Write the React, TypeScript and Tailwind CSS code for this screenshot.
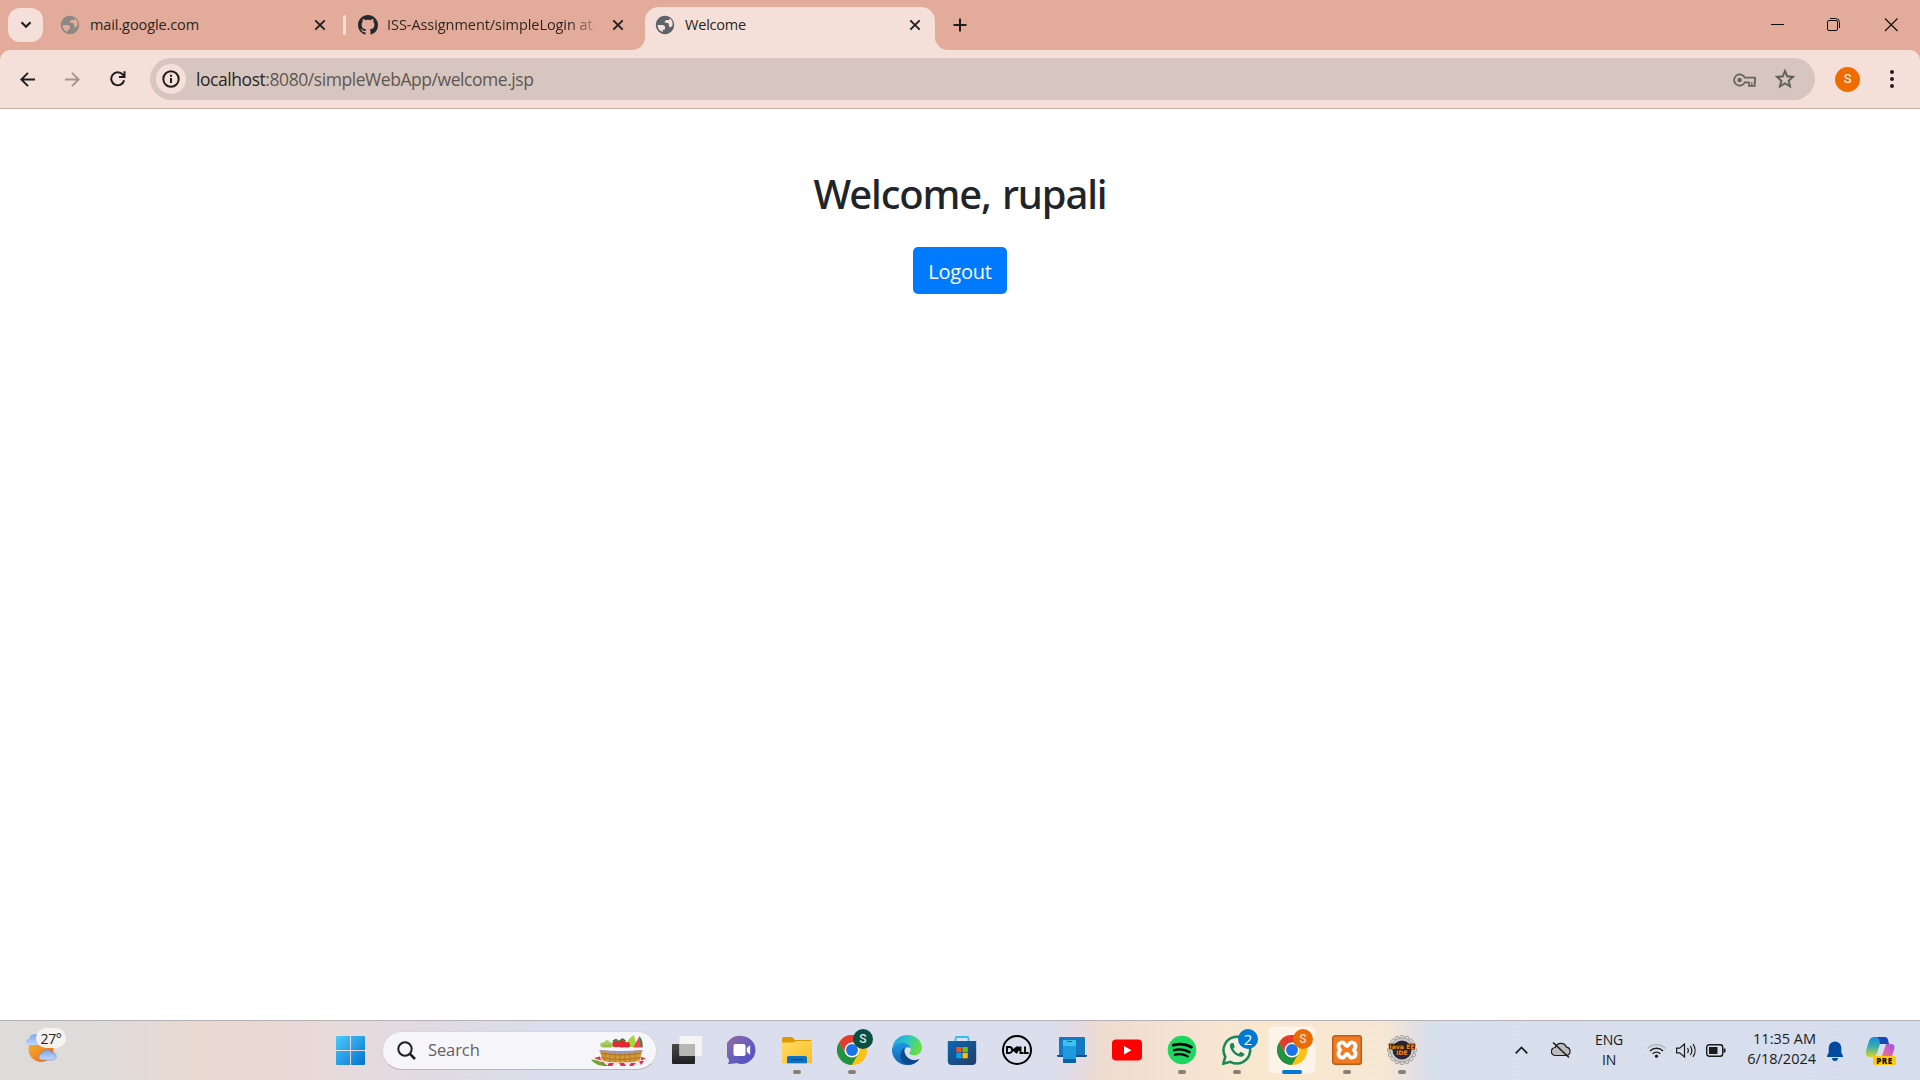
import React from "react";

const ui = "font-['Open_Sans','Noto_Sans',sans-serif]";

function Globe({ color }: { color: string }) {
  return (
    <svg className="size-[22px] shrink-0" viewBox="0 0 24 24" fill={color}>
      <path d="M12 2C6.48 2 2 6.48 2 12s4.48 10 10 10 10-4.48 10-10S17.52 2 12 2zM4 12h4.4c3.41.02 4.49 1.73 3.22 5.13H9.56v2.48A8 8 0 0 1 4 12zm15.92 1.15c-.86.79-1.59 1.18-2.19 1.18-.95 0-1.45-.5-1.45-2.43 0-1.65-.9-2.46-2.8-2.46-.75 0-1.26.1-1.75.1 0-2.1.85-2.95 2.1-2.95h1.7c1.2 0 1.75-1 1.75-2.0a8 8 0 0 1 2.64 8.56z" />
    </svg>
  );
}

function Close() {
  return (
    <svg className="size-3 shrink-0" viewBox="0 0 12 12" stroke="#1f1f1f" strokeWidth="1.9">
      <path d="M1.3 1.3l9.4 9.4M10.7 1.3l-9.4 9.4" />
    </svg>
  );
}

function Github() {
  return (
    <svg className="size-5 shrink-0" viewBox="0 0 16 16" fill="#24292f">
      <path d="M8 0C3.58 0 0 3.58 0 8c0 3.54 2.29 6.53 5.47 7.59.4.07.55-.17.55-.38 0-.19-.01-.82-.01-1.49-2.01.37-2.53-.49-2.69-.94-.09-.23-.48-.94-.82-1.13-.28-.15-.68-.52-.01-.53.63-.01 1.08.58 1.23.82.72 1.21 1.87.87 2.33.66.07-.52.28-.87.51-1.07-1.78-.2-3.64-.89-3.64-3.95 0-.87.31-1.59.82-2.15-.08-.2-.36-1.02.08-2.12 0 0 .67-.21 2.2.82.64-.18 1.32-.27 2-.27s1.36.09 2 .27c1.53-1.04 2.2-.82 2.2-.82.44 1.1.16 1.92.08 2.12.51.56.82 1.27.82 2.15 0 3.07-1.87 3.75-3.65 3.95.29.25.54.73.54 1.48 0 1.07-.01 1.93-.01 2.2 0 .21.15.46.55.38A8.01 8.01 0 0 0 16 8c0-4.42-3.58-8-8-8z" />
    </svg>
  );
}

function TabStrip() {
  return (
    <div className="flex h-[50px] shrink-0 items-start bg-[#e3ab99]">
      <div className="ml-2 mt-2 flex h-[34px] w-[35px] items-center justify-center rounded-xl bg-[#f5e0d9]">
        <svg className="size-[12px]" viewBox="0 0 12 12" fill="none" stroke="#1f1f1f" strokeWidth="2.2">
          <path d="M1.5 3.3L6 7.8l4.500-4.500" />
        </svg>
      </div>
      <div className="ml-4 flex h-[50px] w-[267px] items-center">
        <Globe color="#8b8986" />
        <span className="ml-[9px] w-[225px] whitespace-nowrap text-[14.5px] tracking-[-0.1px] text-[#2b2421]">mail.google.com</span>
        <Close />
      </div>
      <div className="ml-[17px] mt-[15px] h-5 w-[3px] rounded-full bg-[#f5e0d9]" />
      <div className="ml-3 flex h-[50px] w-[287px] items-center">
        <Github />
        <div className="ml-[9px] w-[225px]">
          <div className="w-[208px] overflow-hidden whitespace-nowrap bg-[linear-gradient(90deg,#2b2421_88%,#e3ab99_103%)] bg-clip-text text-[14.5px] tracking-[-0.06px] text-transparent">ISS-Assignment/simpleLogin at</div>
        </div>
        <Close />
      </div>
      <div className="mt-[7px] flex h-[43px] w-[290px] items-center rounded-t-[14px] bg-[#f5e0d9] pb-[7px] pl-[9px]">
        <Globe color="#5f6368" />
        <span className="ml-[9px] w-[224px] text-[14.5px] tracking-[-0.2px] text-[#2b2421]">Welcome</span>
        <Close />
      </div>
      <svg className="ml-[18px] mt-[18px] size-[14px]" viewBox="0 0 14 14" stroke="#1f1f1f" strokeWidth="2">
        <path d="M7 .5v13M.5 7h13" />
      </svg>
      <svg className="ml-auto mr-[22px] mt-[18px] h-[14px] w-[128px]" viewBox="0 0 128 14" fill="none" stroke="#111" strokeWidth="1">
        <path d="M1 6.500h13" />
        <path d="M60 .5h5.500a4 4 0 0 1 4 4V10" />
        <rect x="57.500" y="2.500" width="10" height="10" rx="1.500" />
        <path d="M115 .5l12.500 12.500M127.500.5L115 13" strokeWidth="1.200" />
      </svg>
    </div>
  );
}

function Toolbar() {
  return (
    <div className="bg-[#e3ab99]">
      <div className="relative flex h-[59px] items-center rounded-t-[10px] border-b border-[#c9b1ab] bg-[#f5e0d9]">
        <svg className="absolute -top-[13px] left-[632px] size-[13px]" viewBox="0 0 13 13" fill="#f5e0d9"><path d="M13 0v13H0A13 13 0 0 0 13 0z" /></svg>
        <svg className="absolute -top-[13px] left-[935px] size-[13px]" viewBox="0 0 13 13" fill="#f5e0d9"><path d="M0 0v13h13A13 13 0 0 1 0 0z" /></svg>
        <svg className="ml-5 size-[15px]" viewBox="0 0 15 15" fill="none" stroke="#1f1f1f" strokeWidth="1.900"><path d="M15 7.500H1.500M8 .8L1.300 7.500 8 14.200" /></svg>
        <svg className="ml-[30px] size-[15px]" viewBox="0 0 15 15" fill="none" stroke="#a3958f" strokeWidth="1.900"><path d="M0 7.500h13.500M7 .8l6.700 6.700L7 14.200" /></svg>
        <svg className="ml-[30px] size-4" viewBox="0 0 16 16" fill="none" stroke="#1f1f1f" strokeWidth="2"><path d="M14.100 9.200A6.500 6.500 0 1 1 12.800 3.700L14.500 5.500M14.500.3v5.700H9" /></svg>
        <div className="ml-6 flex h-[42px] w-[1665px] items-center rounded-full bg-[#d7c6bf]">
          <div className="ml-[6px] flex size-[30px] items-center justify-center rounded-full bg-[#f5e0d9]">
            <svg className="size-[18px]" viewBox="0 0 18 18" fill="none" stroke="#1f1f1f" strokeWidth="2"><circle cx="9" cy="9" r="7.700" /><path d="M9 8v5M9 4.800v2" /></svg>
          </div>
          <span className="ml-[10px] pt-px text-[17.5px] tracking-[-0.44px] text-[#5e5754]"><span className="text-[#2a2725]">localhost</span>:8080/simpleWebApp/welcome.jsp</span>
          <svg className="ml-auto mt-[2px] h-[14px] w-[23px]" viewBox="0 0 23 14" fill="none" stroke="#666361" strokeWidth="1.800"><path d="M11.800 4.700A5.600 5.600 0 1 0 11.800 9.300H16V12.800h5.700V9.300h.3V4.700z" /><path d="M18.800 9v3" strokeWidth="1.200" /><circle cx="6.600" cy="7" r="2.300" fill="#666361" stroke="none" /></svg>
          <svg className="ml-[17px] mr-[18px] size-[24px]" viewBox="0 0 24 24" fill="#5f5d5c" stroke="#5f5d5c" strokeWidth=".4"><path d="M22 9.240l-7.190-.62L12 2 9.190 8.630 2 9.240l5.460 4.730L5.820 21 12 17.270 18.180 21l-1.630-7.030L22 9.240zM12 15.400l-3.760 2.270 1-4.280-3.320-2.880 4.380-.38L12 6.100l1.710 4.040 4.380.38-3.320 2.880 1 4.280L12 15.400z" /></svg>
        </div>
        <div className="ml-5 flex size-[25px] items-center justify-center rounded-full bg-[#ef6c00] text-[13px] text-white font-['Roboto',sans-serif]">S</div>
        <div className="ml-[30px] flex flex-col gap-[3px]"><i className="size-1 rounded-full bg-[#1f1f1f]" /><i className="size-1 rounded-full bg-[#1f1f1f]" /><i className="size-1 rounded-full bg-[#1f1f1f]" /></div>
      </div>
    </div>
  );
}

function ChromeLogo() {
  return (
    <svg className="size-[30px]" viewBox="0 0 48 48">
      <circle cx="24" cy="24" r="24" fill="#fbc116" />
      <path d="M3.200 12A24 24 0 0 1 44.800 12H24L13.600 30z" fill="#e33b2e" />
      <path d="M3.200 12A24 24 0 0 0 24 48L34.400 30H13.600z" fill="#229342" />
      <path d="M24 12h20.800A24 24 0 0 1 24 48l10.400-18z" fill="#fbc116" />
      <circle cx="24" cy="24" r="12" fill="#fff" />
      <circle cx="24" cy="24" r="9.500" fill="#1a73e8" />
    </svg>
  );
}

function Badge({ children, tone }: { children: React.ReactNode; tone: string }) {
  return <span className={`absolute -right-[6px] -top-[6px] flex size-5 items-center justify-center rounded-full ${tone}`}>{children}</span>;
}

function AppIcon({ children, state }: { children: React.ReactNode; state?: "open" | "active" }) {
  return (
    <div className="relative flex h-[60px] w-[55px] items-center justify-center">
      {state === "active" && <div className="absolute left-[3.5px] top-[6px] size-12 rounded-[5px] border border-[#f6ecdf] bg-[#fcf4e8]" />}
      <div className="relative flex size-[30px] items-center justify-center">{children}</div>
      {state === "open" && <div className="absolute left-[23.5px] top-[50px] h-1 w-2 rounded-full bg-[#868079]" />}
      {state === "active" && <div className="absolute left-[17.5px] top-[50px] h-1 w-5 rounded-full bg-[#0078d4]" />}
    </div>
  );
}

const teeth = Array.from({ length: 16 }, (_, i) => i * 22.5);

function Apps() {
  return (
    <div className="ml-[2.5px] flex">
      <AppIcon>
        <svg className="size-[30px]" viewBox="0 0 30 30">
          <defs><linearGradient id="tv" x1="0" y1="0" x2="0" y2="1"><stop stopColor="#474747" /><stop offset="1" stopColor="#202020" /></linearGradient></defs>
          <rect y="9" width="23" height="20" rx="1" fill="url(#tv)" /><rect x="7.500" y="1" width="22.500" height="20" rx="1" fill="#f4f4f4" /><path d="M7.500 9H23v12H8.500a1 1 0 0 1-1-1z" fill="#b7b7b7" />
        </svg>
      </AppIcon>
      <AppIcon>
        <svg className="size-[30px]" viewBox="0 0 30 30">
          <defs><linearGradient id="ch" x1="0" y1="0" x2="1" y2="1"><stop stopColor="#9a6a9c" /><stop offset=".5" stopColor="#6a61bb" /><stop offset="1" stopColor="#4c4bc8" /></linearGradient></defs>
          <path d="M15 1a14 14 0 1 1-5.500 27.100C6.500 29 3 29 .8 29c1.300-1.400 1.300-3.500.9-5A14 14 0 0 1 15 1z" fill="url(#ch)" />
          <rect x="6.500" y="9" width="12" height="12" rx="1.800" fill="#fff" /><path d="M19.800 13l3.300-2.800v9.600L19.800 17z" fill="#fff" />
        </svg>
      </AppIcon>
      <AppIcon state="open">
        <svg className="size-[30px]" viewBox="0 0 30 30">
          <defs><linearGradient id="fo" x1="0" y1="0" x2="1" y2="1"><stop stopColor="#ffdd68" /><stop offset="1" stopColor="#fbbd20" /></linearGradient></defs>
          <path d="M0 8V3.500A1.500 1.500 0 0 1 1.500 2H10l3 3h15.500A1.500 1.500 0 0 1 30 6.500V12H0z" fill="#dd9a04" />
          <path d="M0 7.500h11L14 6h16v21a1.300 1.300 0 0 1-1.300 1.300H1.300A1.300 1.300 0 0 1 0 27z" fill="url(#fo)" />
          <path d="M5 28.300V23a2 2 0 0 1 2-2h16a2 2 0 0 1 2 2v5.300z" fill="#0a72c4" /><path d="M9 24.700h12" stroke="#063f78" strokeWidth="1" />
        </svg>
      </AppIcon>
      <AppIcon state="open"><ChromeLogo /><Badge tone="bg-[#0a4f41]"><span className="text-[12px] font-medium text-[#d6e5df] font-['Roboto',sans-serif]">S</span></Badge></AppIcon>
      <AppIcon>
        <svg className="size-[30px]" viewBox="0 0 30 30">
          <defs>
            <linearGradient id="e1" x1="0" y1="0" x2="1" y2=".4"><stop stopColor="#219bea" /><stop offset=".5" stopColor="#2cc5c7" /><stop offset="1" stopColor="#65df45" /></linearGradient>
            <linearGradient id="e2" x1="0" y1="0" x2="0" y2="1"><stop stopColor="#2196e4" /><stop offset="1" stopColor="#0c62b5" /></linearGradient>
          </defs>
          <path d="M.3 13C1.300 5.500 7.500 0 15 0c9 0 15 6 15 12.800 0 4.500-3.400 7.500-7.800 7.500-3.700 0-5-1.500-4.700-2.800.3-.8 1.300-1.500 1.300-3.500 0-3-4-5.500-8.500-5.500-5 0-8.500 2.500-10 4.500z" fill="url(#e1)" />
          <path d="M0 14C1.800 10.200 5.500 7.800 10.300 7.800c4.700 0 8 2.600 8.400 5.600-1.700-1.600-4.200-1.500-5.400.2-3.500 4.500.2 11.400 6.700 11.900 3.200.2 5.700-.7 7.500-1.600C24.800 27.700 20.500 30 15 30A15 15 0 0 1 0 14z" fill="url(#e2)" />
          <path d="M12.600 12.500c-1.500 5.300 2.600 12.300 9.400 12.700 2.700 0 4.300-.6 5.500-1.200C24.500 28 20 30 16 29.800 7 28 6.500 17 12.600 12.500z" fill="#0b4a8b" />
        </svg>
      </AppIcon>
      <AppIcon>
        <svg className="size-[30px]" viewBox="0 0 30 30">
          <defs><linearGradient id="st" x1="0" y1="0" x2="1" y2="1"><stop stopColor="#0968b4" /><stop offset="1" stopColor="#263b67" /></linearGradient></defs>
          <path d="M8.500 7V3.500A1.500 1.500 0 0 1 10 2h10a1.500 1.500 0 0 1 1.500 1.500V7" fill="none" stroke="#35bdf0" strokeWidth="1.800" />
          <path d="M.8 6h28.400v20a4 4 0 0 1-4 4H4.800a4 4 0 0 1-4-4z" fill="url(#st)" />
          <rect x="9.300" y="12" width="5.300" height="5.300" fill="#f25022" /><rect x="15.500" y="12" width="5.300" height="5.300" fill="#7fba00" /><rect x="9.300" y="18" width="5.300" height="5.300" fill="#00a4ef" /><rect x="15.500" y="18" width="5.300" height="5.300" fill="#ffb900" />
        </svg>
      </AppIcon>
      <AppIcon>
        <div className="flex size-[30px] items-center justify-center rounded-full border-2 border-black">
          <svg className="h-[8px] w-[23px] shrink-0" viewBox="0 0 23 8" fill="none" stroke="#000" strokeWidth="1.900"><path d="M1 1h2.200a3 3 0 0 1 0 6H1zM11.800.9L7.300 4l4 3 M9 4.100l4.300-3M10.500 5.400l4-3M14.500.5V7h3.200M19 .5V7h3.500" /></svg>
        </div>
      </AppIcon>
      <AppIcon>
        <svg className="size-[30px]" viewBox="0 0 30 30">
          <rect x="2" y="2" width="26" height="19" rx="1" fill="#137ac1" /><path d="M0 20h30v1.200l-1 .8H1l-1-.8z" fill="#11508e" />
          <rect x="6" y="5" width="13" height="23" rx="1.200" fill="#1d9ae0" /><path d="M6 5h13v6H6z" fill="#3bc3ec" /><path d="M6 24h13v3a1 1 0 0 1-1 1H7a1 1 0 0 1-1-1z" fill="#0b61a8" /><path d="M10 6.500h5" stroke="#0e548d" />
        </svg>
      </AppIcon>
      <AppIcon>
        <svg className="size-[30px]" viewBox="0 0 30 30"><rect y="4.500" width="30" height="21" rx="4" fill="#f00" /><path d="M12 11v8.500l7.500-4.250z" fill="#fff" /></svg>
      </AppIcon>
      <AppIcon state="open">
        <svg className="size-[30px]" viewBox="0 0 30 30" fill="none" stroke="#000" strokeLinecap="round"><circle cx="15" cy="15" r="14.300" fill="#1ed760" stroke="none" /><path d="M6.300 10.200c6-1.700 13-1.100 18 1.900" strokeWidth="2.900" /><path d="M7 15.200c5-1.400 11-.8 15.500 1.900" strokeWidth="2.400" /><path d="M7.700 19.700c4.500-1.100 9-.6 13 1.700" strokeWidth="2" /></svg>
      </AppIcon>
      <AppIcon state="open">
        <svg className="size-[30px]" viewBox="0 0 30 30">
          <path d="M1.300 28.700l2-7A13.300 13.300 0 1 1 8.500 26.800z" fill="#f5efe2" stroke="#1b8755" strokeWidth="2.500" />
          <path d="M10.300 8c-1.600 0-2.600 1.600-2.400 3.200.6 5 6.400 10.500 11.200 10.600 1.800 0 3.500-1.400 3.300-3l-3.700-2-1.900 2c-2.500-1-4.500-2.900-5.500-5.300l1.500-1.600L11.500 8z" fill="#1b8755" />
        </svg>
        <Badge tone="bg-[#0078d4]"><span className={`${ui} text-[15px] text-white`}>2</span></Badge>
      </AppIcon>
      <AppIcon state="active"><ChromeLogo /><Badge tone="bg-[#e86b05]"><span className="text-[12px] font-medium text-[#f9d5b8] font-['Roboto',sans-serif]">S</span></Badge></AppIcon>
      <AppIcon state="open">
        <svg className="size-[30px]" viewBox="0 0 30 30">
          <rect x=".7" y=".7" width="28.600" height="28.600" rx="2.500" fill="#f47a20" stroke="#b75b1b" strokeWidth="1.400" />
          <path d="M9.500 7.500c4-1 3 3.500 5.500 3.500s1.500-4.500 5.500-3.500 3.500 5 1.500 7.500c2 2.500 2.500 6.500-1.500 7.500S17.500 19 15 19s-1.500 4.500-5.500 3.500-3.500-5-1.500-7.500c-2-2.500-2.500-6.500 1.500-7.500z" fill="none" stroke="#fff" strokeWidth="3.800" />
        </svg>
      </AppIcon>
      <AppIcon state="open">
        <svg className="size-[30px] overflow-visible" viewBox="0 0 30 30">
          {teeth.map((a) => <rect key={a} x="13.200" y=".5" width="3.600" height="5" rx="1" fill="#e0ded8" stroke="#777" strokeWidth=".6" transform={`rotate(${a} 15 15)`} />)}
          <circle cx="15" cy="15" r="12" fill="#cfccc6" stroke="#777" strokeWidth=".5" /><circle cx="15" cy="15" r="9.500" fill="#2a2440" />
          <path d="M2 8.800h26v5.800H2zM9.500 15.200h11v5.800h-11z" fill="#33200f" />
          <g fill="#f58a1c" fontFamily="DejaVu Sans" fontWeight="700" fontSize="6.200" textAnchor="middle"><text x="15" y="14">Java EE</text><text x="15" y="20.300">IDE</text></g>
        </svg>
      </AppIcon>
    </div>
  );
}

function Basket() {
  return (
    <svg className="h-[31px] w-[58px]" viewBox="0 0 58 31">
      <path d="M0 25l9-3 42-1 7 4-3 2-5 3H17z" fill="#f3e6e8" />
      <path d="M3 23l6-1.500 1 4zM8 27l4 0 4 4h-4zM18 28h5l-2 3h-5zM28 28h5l2 3h-5zM40 28h5l-3 3h-4zM48 26h5l-3 4zM50 22l5 1.500-5 2z" fill="#d93249" />
      <path d="M0 24.500q6 0 10 2.500t7 3.500H9Q3 28.500 0 24.500z" fill="#6fa52f" />
      <path d="M9 15h42l-2 10q-3 2.500-19 2.500T11 25z" fill="#d39a3a" />
      <path d="M9.500 18q20.500 4 41 0M10.500 22.500q19.500 4 39 0" stroke="#a8701f" strokeWidth="1" fill="none" />
      <path d="M14 17v9M19 17v10M24 18v9M29 18v9M34 18v9M39 18v9M44 17v9" stroke="#b87e28" strokeWidth="1.200" fill="none" />
      <g fill="#a9cf62"><circle cx="12" cy="10" r="2.800" /><circle cx="16" cy="8" r="2.800" /><circle cx="20" cy="10" r="2.800" /></g>
      <g fill="#93bf45"><circle cx="14" cy="11.500" r="2.200" /><circle cx="18" cy="11.500" r="2.200" /></g>
      <path d="M36 12q0-9 7-12l3 12z" fill="#a4d640" /><path d="M42 13L48.500 1l3 12z" fill="#ee4650" /><path d="M48.500 1q4 5 3 12h-1.300z" fill="#2c8c3e" />
      <g fill="#e52736"><circle cx="25" cy="9" r="3.500" /><circle cx="31" cy="9" r="4" /><circle cx="36" cy="10" r="3" /></g>
      <path d="M22 6l3-1.500 3 2M28.500 6l3-2 3 2" stroke="#2e7d32" strokeWidth="1.500" fill="none" />
      <path d="M8 12.500h44v2.500q-22 2.500-44 0z" fill="#f6f5fb" /><path d="M8.500 15q21.500 2 43 0v1.800q-21.500 2.500-43 0z" fill="#9a97c8" />
    </svg>
  );
}

function Taskbar() {
  return (
    <div className="flex h-[60px] shrink-0 items-center border-t border-[#b5b1b6] bg-[linear-gradient(90deg,#dddcdb_0px,#dfdbda_110px,#ead9d1_200px,#e8d8d2_270px,#e8dadb_330px,#dfdbe2_440px,#dadeed_560px,#dadeed_1050px,#e4dae4_1078px,#eddccf_1100px,#f4e3d2_1180px,#f9e8ce_1260px,#f6e7d3_1385px,#e6e0e2_1410px,#d8dfed_1432px,#d6ddec_1920px)] pb-px">
      <div className="relative ml-[26px] h-[46px] w-10">
        <svg className="h-[36px] w-[32px]" viewBox="0 0 32 36">
          <defs><linearGradient id="su" x1="0" y1="0" x2="1" y2="1"><stop stopColor="#f4bd3c" /><stop offset="1" stopColor="#e9610e" /></linearGradient><linearGradient id="cl" x1="0" y1="0" x2="0" y2="1"><stop stopColor="#7fa8ea" /><stop offset="1" stopColor="#c2d6f6" /></linearGradient></defs>
          <circle cx="15" cy="22.500" r="12.500" fill="url(#su)" />
          <path d="M3 18a3 3 0 0 1 0-6 6 6 0 0 1 11-2v8z" fill="url(#cl)" />
          <path d="M16 33a3.200 3.200 0 0 1 0-6.400 5.500 5.500 0 0 1 10-.8 3.600 3.600 0 0 1 1 7.200z" fill="url(#cl)" stroke="#6b8fd6" strokeWidth=".6" />
        </svg>
        <span className={`${ui} absolute left-[10px] top-px flex h-5 w-[30px] items-center justify-center rounded-full bg-[#f7f4f2]/95 pt-px text-[14px] tracking-[-0.3px] text-[#222]`}>27°</span>
      </div>
      <svg className="ml-[270px] size-[29px]" viewBox="0 0 29 29">
        <defs><linearGradient id="wi" x1="0" y1="0" x2="29" y2="29" gradientUnits="userSpaceOnUse"><stop stopColor="#4cccfb" /><stop offset="1" stopColor="#0370cf" /></linearGradient></defs>
        <path d="M1 0h13v14H0V1a1 1 0 0 1 1-1zM15 0h13a1 1 0 0 1 1 1v13H15zM0 15h14v14H1a1 1 0 0 1-1-1zM15 15h14v13a1 1 0 0 1-1 1H15z" fill="url(#wi)" />
      </svg>
      <div className="ml-[17px] flex h-[39px] w-[275px] items-center rounded-full border border-[#dcd6dc] border-b-[#b9b5bb] bg-[#f6f5f9]">
        <svg className="ml-[14px] size-[19px]" viewBox="0 0 19 19" fill="none" stroke="#1f1f1f" strokeWidth="2"><circle cx="8" cy="8" r="6.700" /><path d="M12.700 12.700l5.300 5.300" strokeWidth="2.600" /></svg>
        <span className={`${ui} ml-[12px] flex-1 pt-px text-[16.5px] tracking-[-0.1px] text-[#636163]`}>Search</span>
        <div className="mr-[7px]"><Basket /></div>
      </div>
      <Apps />
      <svg className="ml-[85px] h-2 w-[13px]" viewBox="0 0 13 8" fill="none" stroke="#1b1b1b" strokeWidth="1.700"><path d="M.7 7.300l5.800-5.800 5.800 5.800" /></svg>
      <svg className="ml-[23.5px] h-[16px] w-5" viewBox="0 0 20 16" stroke="#1b1b1b" strokeWidth="1.200"><path d="M4.500 13.500a4 4 0 0 1-.3-8A6 6 0 0 1 15.500 5.200a4.200 4.200 0 0 1 0 8.300z" fill="#bcbcbe" /><path d="M2 .5l16 15" strokeWidth="1.500" /></svg>
      <div className={`${ui} ml-[18px] w-10 text-center text-[14px] leading-5 tracking-[-0.2px] text-[#1b1b1b]`}>ENG<br />IN</div>
      <svg className="ml-[18px] h-[15px] w-[19px]" viewBox="0 0 19 15" fill="none" stroke="#1b1b1b" strokeWidth="1.400"><path d="M.5 5.500a12.700 12.700 0 0 1 18 0" stroke="#b1b5bf" /><path d="M3 8a9.200 9.200 0 0 1 13 0M5.700 10.700a5.400 5.400 0 0 1 7.600 0" /><circle cx="9.500" cy="13.200" r="1.600" fill="#1b1b1b" stroke="none" /></svg>
      <svg className="ml-[10px] h-[15px] w-[21px]" viewBox="0 0 21 15" fill="none" stroke="#1b1b1b" strokeWidth="1.200"><path d="M.6 5.200h3L8.500 1v13L3.600 9.800h-3zM11.500 5a4.500 4.500 0 0 1 0 5M14.200 3a7.500 7.500 0 0 1 0 9M17 1.200a10.500 10.500 0 0 1 0 12.600" /></svg>
      <svg className="ml-[9px] h-[13px] w-5" viewBox="0 0 20 13" fill="none" stroke="#1b1b1b" strokeWidth="1.400"><rect x=".7" y=".7" width="16" height="11.600" rx="2.500" /><rect x="3" y="3" width="8.500" height="7" fill="#1b1b1b" stroke="none" /><path d="M18.500 4.500v4" strokeWidth="2" /></svg>
      <div className={`${ui} ml-4 w-[74px] whitespace-nowrap pb-[3px] text-right text-[14.5px] leading-5 tracking-[0px] text-[#1b1b1b]`}>11:35 AM<br />6/18/2024</div>
      <svg className="ml-[11px] mt-px h-5 w-4" viewBox="0 0 16 20" fill="#004a9f"><path d="M8 .5a6.300 6.300 0 0 1 6.300 6.300v4.700L16 15v1H0v-1l1.700-3.500V6.800A6.300 6.300 0 0 1 8 .5zM5 17h6a3 3 0 0 1-6 0z" /></svg>
      <div className="relative ml-[23px] h-[28px] w-[30px]">
        <svg className="size-[30px]" viewBox="0 0 30 30">
          <defs><linearGradient id="c1" x1="0" y1="0" x2="0" y2="1"><stop stopColor="#1a8be6" /><stop offset=".45" stopColor="#33aab0" /><stop offset="1" stopColor="#d8d823" /></linearGradient><linearGradient id="c2" x1="1" y1="0" x2="0" y2="1"><stop stopColor="#9355e8" /><stop offset=".5" stopColor="#dd64b2" /><stop offset="1" stopColor="#f98647" /></linearGradient></defs>
          <path d="M8 1h11c-3 0-4 3-5 7l-3 9c-1 3-3 4-5 4H4c-4 0-5-3-4-6L3 5c1-3 3-4 5-4z" fill="url(#c1)" /><path d="M12 1h7c3 0 3 3 4 7h-9c0-3-1-7-4-7z" fill="#1748b5" /><path d="M21 8h4c4 0 4 3 3 6l-3 9H12c3 0 4-3 5-6l2-6c.5-2 1-3 2-3z" fill="url(#c2)" />
        </svg>
        <span className={`${ui} absolute left-[7px] top-[20px] flex h-[9px] w-[23px] items-center justify-center rounded-[2px] bg-[#ffc80a] text-[8px] font-extrabold leading-none tracking-[0.6px] text-[#111]`}>PRE</span>
      </div>
    </div>
  );
}

export default function App() {
  return (
    <div className={`${ui} flex h-[1080px] w-[1920px] flex-col overflow-hidden bg-white`}>
      <TabStrip />
      <Toolbar />
      <main className="flex flex-1 flex-col items-center pt-[61px]">
        <h2 className="text-[40px] font-medium leading-[48px] tracking-[-1.15px] text-[#212529] [word-spacing:2px] font-['Noto_Sans',sans-serif]">Welcome, rupali</h2>
        <button className="mt-[29px] h-[47px] w-[94px] rounded-[5px] bg-[#007bff] pt-[3px] text-[20px] tracking-[-0.2px] text-white">Logout</button>
      </main>
      <Taskbar />
    </div>
  );
}
